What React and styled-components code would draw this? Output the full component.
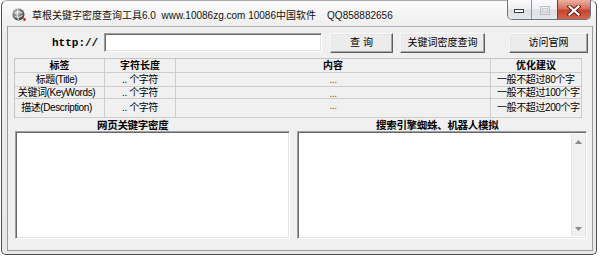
import React from 'react'
import styled, { createGlobalStyle } from 'styled-components'

const GlobalStyle = createGlobalStyle`
  html, body {
    margin: 0;
    padding: 0;
    background: #ffffff;
  }
  body {
    width: 600px;
    height: 257px;
    overflow: hidden;
    font-family: "Liberation Sans", "Noto Sans CJK SC", sans-serif;
    color: #000;
  }
`

const headers = ['标签', '字符长度', '内容', '优化建议']

const rows = [
  { label: '标题(Title)', len: '.. 个字符', tip: '一般不超过80个字' },
  { label: '关键词(KeyWords)', len: '.. 个字符', tip: '一般不超过100个字' },
  { label: '描述(Description)', len: '.. 个字符', tip: '一般不超过200个字' },
]

function AppIcon() {
  return (
    <svg width="15" height="14" viewBox="0 0 15 14">
      <defs>
        <radialGradient id="globe" cx="0.4" cy="0.35" r="0.75">
          <stop offset="0" stopColor="#e0e0e0" />
          <stop offset="0.55" stopColor="#6c6c6c" />
          <stop offset="1" stopColor="#262626" />
        </radialGradient>
      </defs>
      <circle cx="6.5" cy="6.5" r="6" fill="url(#globe)" />
      <path d="M2.5 5 Q6.5 2.5 10.5 5 M2.5 8.5 Q6 11 10.5 7.5 M6 1 Q4 6.5 6.5 12" stroke="#f2f2f2" strokeWidth="0.9" fill="none" />
      <circle cx="12.5" cy="11.5" r="1.4" fill="#d62020" />
    </svg>
  )
}

function MinGlyph() {
  return (
    <svg width="11" height="6" viewBox="0 0 11 6">
      <rect x="0.5" y="1.5" width="9" height="3" fill="#ffffff" stroke="#3c3c3c" />
    </svg>
  )
}

function MaxGlyph() {
  return (
    <svg width="10" height="9" viewBox="0 0 10 9">
      <rect x="0.5" y="0.5" width="9" height="8" fill="none" stroke="#b9bec4" />
      <rect x="2.5" y="2.5" width="5" height="4" fill="none" stroke="#c8ccd1" />
    </svg>
  )
}

function CloseGlyph() {
  return (
    <svg width="14" height="11" viewBox="0 0 14 11">
      <path d="M2.5 1.5 L11.5 9.5 M11.5 1.5 L2.5 9.5" stroke="#5a1a10" strokeWidth="4" strokeLinecap="square" />
      <path d="M2.5 1.5 L11.5 9.5 M11.5 1.5 L2.5 9.5" stroke="#ffffff" strokeWidth="2.2" strokeLinecap="square" />
    </svg>
  )
}

function Arrow({ down }) {
  return (
    <svg width="7" height="4" viewBox="0 0 7 4">
      <path d={down ? 'M0 0 H7 L3.5 4 Z' : 'M0 4 H7 L3.5 0 Z'} fill="#8a8a8a" />
    </svg>
  )
}

export default function App() {
  return (
    <>
      <GlobalStyle />
      <Window>
        <TitleBar>
          <IconSlot>
            <AppIcon />
          </IconSlot>
          <TitleText>{'草根关键字密度查询工具6.0  www.10086zg.com 10086中国软件    QQ858882656'}</TitleText>
          <Controls>
            <CtrlButton $w={23}>
              <MinGlyph />
            </CtrlButton>
            <CtrlButton $w={26}>
              <MaxGlyph />
            </CtrlButton>
            <CtrlButton $w={33} $close>
              <CloseGlyph />
            </CtrlButton>
          </Controls>
        </TitleBar>

        <Client>
          <TopRow>
            <UrlLabel>http://</UrlLabel>
            <UrlInput />
            <Button $w={63} $gap={8}>查 询</Button>
            <Button $w={85} $gap={7}>关键词密度查询</Button>
            <Button $w={79} $gap={24}>访问官网</Button>
          </TopRow>

          <Grid>
            {headers.map((h) => (
              <Cell key={h} $bold>{h}</Cell>
            ))}
            {rows.map((r) => (
              <React.Fragment key={r.label}>
                <Cell $padRight={6}>{r.label}</Cell>
                <Cell>{r.len}</Cell>
                <Cell $top $muted>...</Cell>
                <Cell $left>{r.tip}</Cell>
              </React.Fragment>
            ))}
          </Grid>

          <LabelRow>
            <SectionLabel $w={275} $pad={82}>网页关键字密度</SectionLabel>
            <SectionLabel $w={290} $pad={79}>搜索引擎蜘蛛、机器人模拟</SectionLabel>
          </LabelRow>

          <BoxRow>
            <TextBox $w={275} />
            <TextBox $w={290}>
              <ScrollBar>
                <Arrow />
                <Arrow down />
              </ScrollBar>
            </TextBox>
          </BoxRow>
        </Client>
      </Window>
    </>
  )
}

const Window = styled.div`
  box-sizing: border-box;
  margin-left: 1px;
  width: 596px;
  height: 255px;
  border: 1px solid #4e4e4e;
  border-top-color: #a8a8a8;
  border-radius: 6px 6px 5px 5px;
  background: linear-gradient(#fbfbfb, #eeeeee 26px, #e8e8e8);
  display: flex;
  flex-direction: column;
  padding: 0 3px 3px 5px;
`

const TitleBar = styled.div`
  height: 25px;
  display: flex;
  align-items: flex-start;
`

const IconSlot = styled.div`
  margin: 7px 4px 0 5px;
  width: 15px;
  height: 14px;
`

const TitleText = styled.div`
  margin-top: 8px;
  margin-left: 1px;
  font-size: 10px;
  line-height: 13px;
  white-space: pre;
  color: #111;
`

const Controls = styled.div`
  margin-left: auto;
  margin-right: 2px;
  margin-top: -1px;
  height: 19px;
  display: flex;
  border: 1px solid #6b7580;
  border-top: none;
  border-radius: 0 0 5px 5px;
  overflow: hidden;
`

const CtrlButton = styled.div`
  box-sizing: border-box;
  width: ${(p) => p.$w}px;
  display: flex;
  align-items: center;
  justify-content: center;
  padding-top: 2px;
  border-left: ${(p) => (p.$close ? '1px solid #7a3a30' : '1px solid #8d959e')};
  &:first-child {
    border-left: none;
  }
  background: ${(p) =>
    p.$close
      ? 'linear-gradient(#eab0a2, #d9705c 45%, #c7432c 55%, #d5664f)'
      : 'linear-gradient(#fbfbfc, #eef0f2 45%, #dde1e5 55%, #e6e9ec)'};
`

const Client = styled.div`
  box-sizing: border-box;
  height: 225px;
  border: 1px solid #9c9c9c;
  border-top-color: #b4b4b4;
  background: #f0f0f0;
  display: flex;
  flex-direction: column;
`

const TopRow = styled.div`
  display: flex;
  align-items: flex-start;
  height: 20px;
  margin-top: 6px;
  padding-left: 44px;
`

const UrlLabel = styled.div`
  width: 46px;
  margin-right: 6px;
  margin-top: 4px;
  font-family: "Liberation Mono", monospace;
  font-weight: bold;
  font-size: 11px;
  line-height: 13px;
`

const sunken = `
  box-sizing: border-box;
  border: 1px solid;
  border-color: #a0a0a0 #ffffff #ffffff #a0a0a0;
  box-shadow: inset 1px 1px #696969, inset -1px -1px #e3e3e3;
  background: #ffffff;
`

const UrlInput = styled.div`
  ${sunken}
  width: 218px;
  height: 19px;
`

const Button = styled.div`
  box-sizing: border-box;
  width: ${(p) => p.$w}px;
  height: 20px;
  margin-left: ${(p) => p.$gap}px;
  border: 1px solid;
  border-color: #f8f8f8 #5e5e5e #5e5e5e #f8f8f8;
  box-shadow: inset -1px -1px #a6a6a6, inset 1px 1px #e6e6e6;
  background: #ececec;
  display: flex;
  align-items: center;
  justify-content: center;
  font-size: 10px;
  line-height: 12px;
`

const Grid = styled.div`
  box-sizing: border-box;
  margin: 5px 0 0 6px;
  width: 568px;
  display: grid;
  grid-template-columns: 90px 71px 315px 91px;
  grid-template-rows: 14px 14px 12px 19px;
  border-top: 1px solid #c4c4c4;
  border-left: 1px solid #c4c4c4;
`

const Cell = styled.div`
  box-sizing: border-box;
  border-right: 1px solid #cdcdcd;
  border-bottom: 1px solid #cdcdcd;
  display: flex;
  align-items: ${(p) => (p.$top ? 'flex-start' : 'center')};
  justify-content: ${(p) => (p.$left ? 'flex-start' : 'center')};
  padding-left: ${(p) => (p.$left ? 6 : 0)}px;
  padding-right: ${(p) => p.$padRight || 0}px;
  padding-top: ${(p) => (p.$top ? 1 : 0)}px;
  font-size: 10px;
  line-height: 12px;
  letter-spacing: ${(p) => (p.$bold ? 0 : -0.4)}px;
  font-weight: ${(p) => (p.$bold ? 'bold' : 'normal')};
  color: ${(p) => (p.$muted ? '#555' : '#000')};
  white-space: nowrap;
  overflow: hidden;
`

const LabelRow = styled.div`
  display: flex;
  gap: 7px;
  height: 13px;
  padding-left: 7px;
`

const SectionLabel = styled.div`
  box-sizing: border-box;
  width: ${(p) => p.$w}px;
  height: 13px;
  padding: 1px 0 0 ${(p) => p.$pad}px;
  font-size: 10.5px;
  line-height: 12px;
  font-weight: bold;
  letter-spacing: -0.3px;
  white-space: nowrap;
`

const BoxRow = styled.div`
  display: flex;
  gap: 7px;
  padding-left: 7px;
`

const TextBox = styled.div`
  ${sunken}
  width: ${(p) => p.$w}px;
  height: 108px;
  display: flex;
  justify-content: flex-end;
  padding: 2px;
`

const ScrollBar = styled.div`
  box-sizing: border-box;
  width: 14px;
  margin-right: -1px;
  background: #f0f0f0;
  border-left: 1px solid #e4e4e4;
  display: flex;
  flex-direction: column;
  align-items: center;
  justify-content: space-between;
  padding: 6px 0 5px;
`
